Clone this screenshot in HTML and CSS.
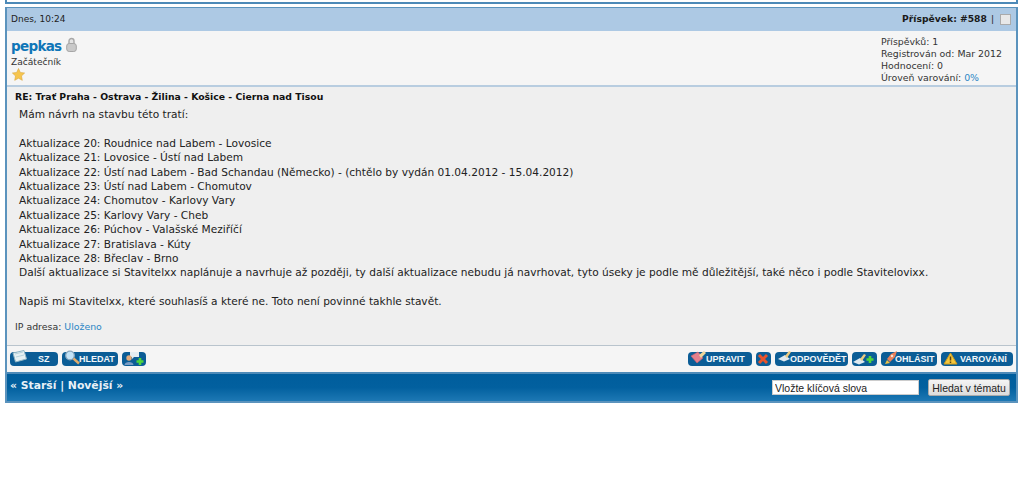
FILE: index.html
```html
<!DOCTYPE html>
<html lang="cs">
<head>
<meta charset="utf-8">
<title>Příspěvek #588</title>
<link rel="stylesheet" href="styles.css">
</head>
<body>
<div class="prev-end"></div>
<div class="post">
  <div class="head">
    <span class="date">Dnes, 10:24</span>
    <span class="head-right"><b>Příspěvek: #588</b> <span class="pipe">|</span> <span class="check"></span></span>
  </div>
  <div class="author">
    <div class="author-left">
      <div class="name-row"><a class="name">pepkas</a>
        <svg class="lock" width="11" height="15" viewBox="0 0 11 15"><path d="M3 7V4a2.500 2.500 0 0 1 5 0v3" fill="#e4e4e4" stroke="#a8a8a8" stroke-width="1.400"/><rect x=".7" y="6.500" width="9.600" height="8" rx="2.500" fill="#c9c9c9" stroke="#a5a5a5"/></svg>
      </div>
      <div class="rank">Začátečník</div>
      <svg class="star" width="13" height="13" viewBox="0 0 14 14"><path d="M7 .5l2 4.300 4.600.6-3.400 3.200.9 4.700L7 11l-4.100 2.300.9-4.700L.4 5.400l4.600-.6z" fill="#f6c54e" stroke="#d9a53a" stroke-width=".6"/></svg>
    </div>
    <div class="stats">
      <div>Příspěvků: 1</div>
      <div>Registrován od: Mar 2012</div>
      <div>Hodnocení: 0</div>
      <div>Úroveň varování: <a>0%</a></div>
    </div>
  </div>
  <div class="body">
    <div class="subject">RE: Trať Praha - Ostrava - Žilina - Košice - Cierna nad Tisou</div>
    <div class="message">Mám návrh na stavbu této tratí:<br>
<br>
Aktualizace 20: Roudnice nad Labem - Lovosice<br>
Aktualizace 21: Lovosice - Ústí nad Labem<br>
Aktualizace 22: Ústí nad Labem - Bad Schandau (Německo) - (chtělo by vydán 01.04.2012 - 15.04.2012)<br>
Aktualizace 23: Ústí nad Labem - Chomutov<br>
Aktualizace 24: Chomutov - Karlovy Vary<br>
Aktualizace 25: Karlovy Vary - Cheb<br>
Aktualizace 26: Púchov - Valašské Meziříčí<br>
Aktualizace 27: Bratislava - Kúty<br>
Aktualizace 28: Břeclav - Brno<br>
Další aktualizace si Stavitelxx naplánuje a navrhuje až později, ty další aktualizace nebudu já navrhovat, tyto úseky je podle mě důležitější, také něco i podle Stavitelovixx.<br>
<br>
Napiš mi Stavitelxx, které souhlasíš a které ne. Toto není povinné takhle stavět.</div>
    <div class="ip">IP adresa: <a>Uloženo</a></div>
  </div>
  <div class="buttons">
    <div class="btn-group">
      <span class="btn b-sz"><svg class="ico" width="16" height="13" viewBox="0 0 16 13"><path d="M1 3l11-2.500 2.500 8.500-11 3z" fill="#e6f1f3" stroke="#8fb5c4"/><path d="M3 4l8-2M4 7l8-2" stroke="#b7d3dc"/></svg><span class="lbl">SZ</span></span>
      <span class="btn b-hl"><svg class="ico" width="17" height="15" viewBox="0 0 17 15"><circle cx="6" cy="5.500" r="4.300" fill="#c3e3f7" stroke="#8ba7bc" stroke-width="1.300"/><path d="M9.500 8.500l5.500 5" stroke="#e0ac6c" stroke-width="2.400"/></svg><span class="lbl">HLEDAT</span></span>
      <span class="btn b-add"><svg class="ico" width="22" height="15" viewBox="0 0 22 15"><path d="M7 1h9v5h-5l-2 2V6H7z" fill="#e3ecf1"/><circle cx="6" cy="7" r="2.700" fill="#e3ab7c"/><path d="M1.500 14c0-4 9-4 9 0z" fill="#7a9cc4"/><path d="M17 7v7M13.500 10.500h7" stroke="#4fd63c" stroke-width="2.600"/></svg></span>
    </div>
    <div class="btn-group">
      <span class="btn b-up"><svg class="ico" width="18" height="15" viewBox="0 0 18 15"><path d="M1 6l7-4 5 6-6 5z" fill="#e4808c" stroke="#c9606c" stroke-width=".6"/><path d="M9 5l5-4 2 2-5 5z" fill="#efd79a"/></svg><span class="lbl">UPRAVIT</span></span>
      <span class="btn b-x"><svg class="ico" width="14" height="14" viewBox="0 0 14 14"><path d="M3 3l8 8M11 3l-8 8" stroke="#e9532b" stroke-width="3"/></svg></span>
      <span class="btn b-od"><svg class="ico" width="16" height="14" viewBox="0 0 16 14"><path d="M1 9l7-4 5 4-6 2.500z" fill="#dfe9ef"/><path d="M8 6l4-5 2 1-4 6z" fill="#eccb80"/></svg><span class="lbl">ODPOVĚDĚT</span></span>
      <span class="btn b-pl"><svg class="ico" width="24" height="14" viewBox="0 0 24 14"><path d="M1 10l7-4 5 4-6 2.500z" fill="#dfe9ef"/><path d="M8 7l4-5 2 1-4 6z" fill="#eccb80"/><path d="M18 4v7M14.500 7.500h7" stroke="#4fd63c" stroke-width="2.600"/></svg></span>
      <span class="btn b-oh"><svg class="ico" width="15" height="15" viewBox="0 0 15 15"><path d="M4 9l4-5 6-3-2 6-5 5z" fill="#e8805a"/><path d="M2 14l2-4 3 3z" fill="#f2c040"/><circle cx="9" cy="6" r="1.200" fill="#f6e3d2"/></svg><span class="lbl">OHLÁSIT</span></span>
      <span class="btn b-va"><svg class="ico" width="15" height="13" viewBox="0 0 15 13"><path d="M7.500 1l6.500 11H1z" fill="#f5c63a" stroke="#c99a20"/><path d="M7.500 4.500v4M7.500 9.500v1.500" stroke="#5a4410" stroke-width="1.500"/></svg><span class="lbl">VAROVÁNÍ</span></span>
    </div>
  </div>
  <div class="foot">
    <div class="pager">« Starší | Novější »</div>
    <div class="search">
      <input class="keywords" type="text" value="Vložte klíčová slova">
      <button class="go" type="button">Hledat v tématu</button>
    </div>
  </div>
</div>
</body>
</html>
```
FILE: styles.css
```css
* { box-sizing: border-box; }
html, body { margin: 0; background: #fff; }
body {
  padding: 0 6px 0 5px;
  font-family: "DejaVu Sans", Verdana, sans-serif;
  font-size: 11px;
  color: #333;
  overflow: hidden;
}
a { color: #2b86c5; text-decoration: none; }
.prev-end { height: 4px; border-style: solid; border-color: #4d8ab8; border-width: 0 2px 2px; margin-bottom: 3px; }
.post { border-style: solid; border-color: #5b93bd; border-width: 1px 2px 2px; background: #fff; }
.head { height: 23px; background: #adc9e4; display: flex; justify-content: space-between; align-items: center; padding: 0 5px 2px 4px; font-size: 9.200px; color: #222; }
.date { font-size: 9px; }
.head-right { display: flex; align-items: center; gap: 4px; }
.head b { color: #1a1a1a; }
.check { width: 11px; height: 11px; border: 1px solid #aaa; background: #e8e8e8; margin: 1px 0 0 2px; }
.author { height: 56px; background: #f5f5f5; display: flex; justify-content: space-between; border-bottom: 2px solid #b8cde0; padding: 4px 4px 0 4px; font-size: 9.400px; }
.name-row { display: flex; align-items: flex-start; gap: 5px; height: 21px; }
.name { color: #0f76b8; font-weight: bold; font-size: 13.500px; letter-spacing: -.7px; line-height: 22px; }
.lock { margin-top: 2px; }
.rank { font-size: 9.100px; line-height: 12px; }
.star { display: block; margin: 0 0 0 1px; }
.stats { width: 131px; line-height: 12px; padding-top: 1px; }
.body { height: 259px; background: #efefef; border-bottom: 1px solid #b9c4cd; padding: 3px 0 0 8px; }
.subject { font-weight: bold; font-size: 9.300px; line-height: 13px; color: #111; }
.message { padding: 4px 0 0 4px; font-size: 10.600px; line-height: 14.400px; color: #222; white-space: nowrap; }
.ip { margin-top: 12px; font-size: 9.400px; line-height: 12px; }
.buttons { height: 26px; background: #f5f5f5; display: flex; justify-content: space-between; align-items: flex-start; padding: 5px 3px 0 3px; }
.btn-group { display: flex; gap: 4px; }
.btn { position: relative; display: block; height: 14px; margin-top: 1px; border-radius: 4px; background: #0b5d96; color: #f2f7fa; font-family: "Liberation Sans", Arial, sans-serif; font-size: 9px; font-weight: bold; }
.lbl { display: block; line-height: 14px; white-space: nowrap; }
.ico { position: absolute; left: 2px; top: -2px; }
.b-sz { width: 48px; padding-left: 28px; }
.b-hl { width: 56px; padding-left: 17px; }
.b-add { width: 24px; }
.b-add .ico { left: 1px; top: -1px; }
.b-up { width: 64px; padding-left: 18px; }
.b-x { width: 15px; }
.b-x .ico { left: 0; top: 0; }
.b-od { width: 73px; padding-left: 15px; }
.b-pl { width: 25px; }
.b-pl .ico { left: 0; top: 0; }
.b-oh { width: 56px; padding-left: 14px; }
.b-va { width: 72px; padding-left: 19px; }
.b-va .ico { left: 2px; top: 0; }
.foot { height: 29px; background: linear-gradient(#005d9c, #02609f 50%, #1d78b4); border-top: 2px solid #4d8ab8; display: flex; justify-content: space-between; padding: 4px 6px 0 3px; }
.pager { color: #e8f0f6; font-weight: bold; font-size: 10.800px; line-height: 15px; }
.search { display: flex; gap: 9px; align-items: flex-start; }
.keywords { width: 147px; height: 15px; margin-top: 2px; border: 1px solid #ccc; padding: 0 2px; font-family: "Liberation Sans", Arial, sans-serif; font-size: 10.500px; color: #222; background: #fff; }
.go { width: 82px; height: 17px; margin-top: 1px; padding: 0; border: 1px solid #aaa; border-radius: 2px; background: linear-gradient(#f4f4f4, #dcdcdc); font-family: "Liberation Sans", Arial, sans-serif; font-size: 10.500px; color: #222; }
```
